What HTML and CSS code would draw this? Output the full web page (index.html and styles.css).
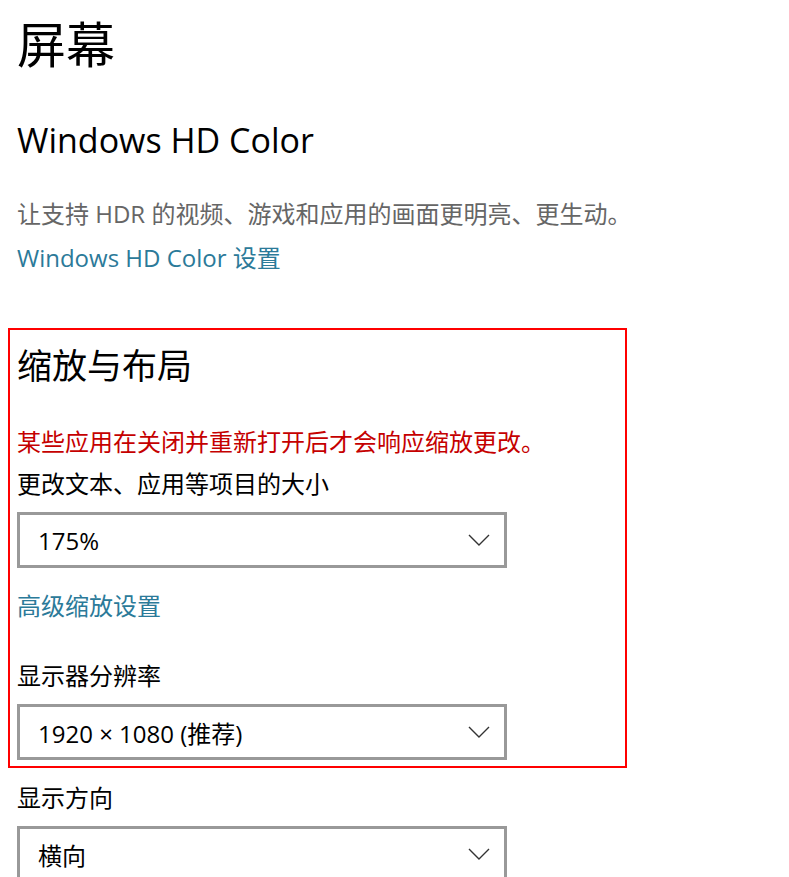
FILE: index.html
```html
<!DOCTYPE html>
<html lang="zh-CN">
<head>
    <meta charset="UTF-8">
    <meta name="viewport" content="width=device-width, initial-scale=1.0">
    <title>屏幕</title>
    <link rel="stylesheet" href="styles.css">
</head>
<body>
    <h1 class="page-title">屏幕</h1>

    <h2 class="section-title">Windows HD Color</h2>
    <p class="desc">让支持 HDR 的视频、游戏和应用的画面更明亮、更生动。</p>
    <a class="link" href="#">Windows HD Color 设置</a>

    <div class="scale-box">
        <h2 class="section-title cjk">缩放与布局</h2>
        <p class="warning">某些应用在关闭并重新打开后才会响应缩放更改。</p>
        <div class="label">更改文本、应用等项目的大小</div>
        <div class="combo">
            <span>175%</span>
            <svg class="chevron" width="22" height="12" viewBox="0 0 22 12"><polyline points="1,1 11,11 21,1" fill="none" stroke="#333" stroke-width="1.4"/></svg>
        </div>
        <a class="link link-adv" href="#">高级缩放设置</a>
        <div class="label label-res">显示器分辨率</div>
        <div class="combo">
            <span>1920 × 1080 (推荐)</span>
            <svg class="chevron" width="22" height="12" viewBox="0 0 22 12"><polyline points="1,1 11,11 21,1" fill="none" stroke="#333" stroke-width="1.4"/></svg>
        </div>
    </div>

    <div class="label label-orient">显示方向</div>
    <div class="combo">
        <span>横向</span>
        <svg class="chevron" width="22" height="12" viewBox="0 0 22 12"><polyline points="1,1 11,11 21,1" fill="none" stroke="#333" stroke-width="1.4"/></svg>
    </div>
</body>
</html>
```
FILE: styles.css
```css
body {
    margin: 0;
    padding: 0 0 0 17px;
    background: #fff;
    color: #000;
    font-family: "Open Sans", "Noto Sans CJK SC", sans-serif;
    overflow: hidden;
}
.page-title {
    margin: 12px 0 0;
    font-size: 49px;
    font-weight: normal;
    line-height: 64px;
}
.section-title {
    margin: 40px 0 0;
    font-size: 34px;
    font-weight: normal;
    line-height: 48px;
}
.desc {
    margin: 34px 0 0;
    font-size: 24px;
    line-height: 32px;
    color: #666;
}
.link {
    display: block;
    margin-top: 12px;
    font-size: 24px;
    line-height: 32px;
    color: #2b7a99;
    text-decoration: none;
}
.scale-box {
    width: 608px;
    margin: 54px 0 0 -9px;
    padding: 12px 0 6px 7px;
    border: 2px solid #f00;
}
.scale-box .section-title {
    margin-top: 0;
    font-size: 35px;
}
.warning {
    margin: 36px 0 0;
    font-size: 24px;
    line-height: 32px;
    color: #c50000;
}
.label {
    margin-top: 10px;
    font-size: 24px;
    line-height: 32px;
}
.combo {
    box-sizing: border-box;
    width: 490px;
    height: 56px;
    margin-top: 12px;
    padding: 0 14px 0 18px;
    border: 3px solid #999;
    display: flex;
    align-items: center;
    justify-content: space-between;
    font-size: 24px;
}
.link-adv {
    margin-top: 22px;
}
.label-res {
    margin-top: 38px;
}
.label-orient {
    margin-top: 14px;
}
```
